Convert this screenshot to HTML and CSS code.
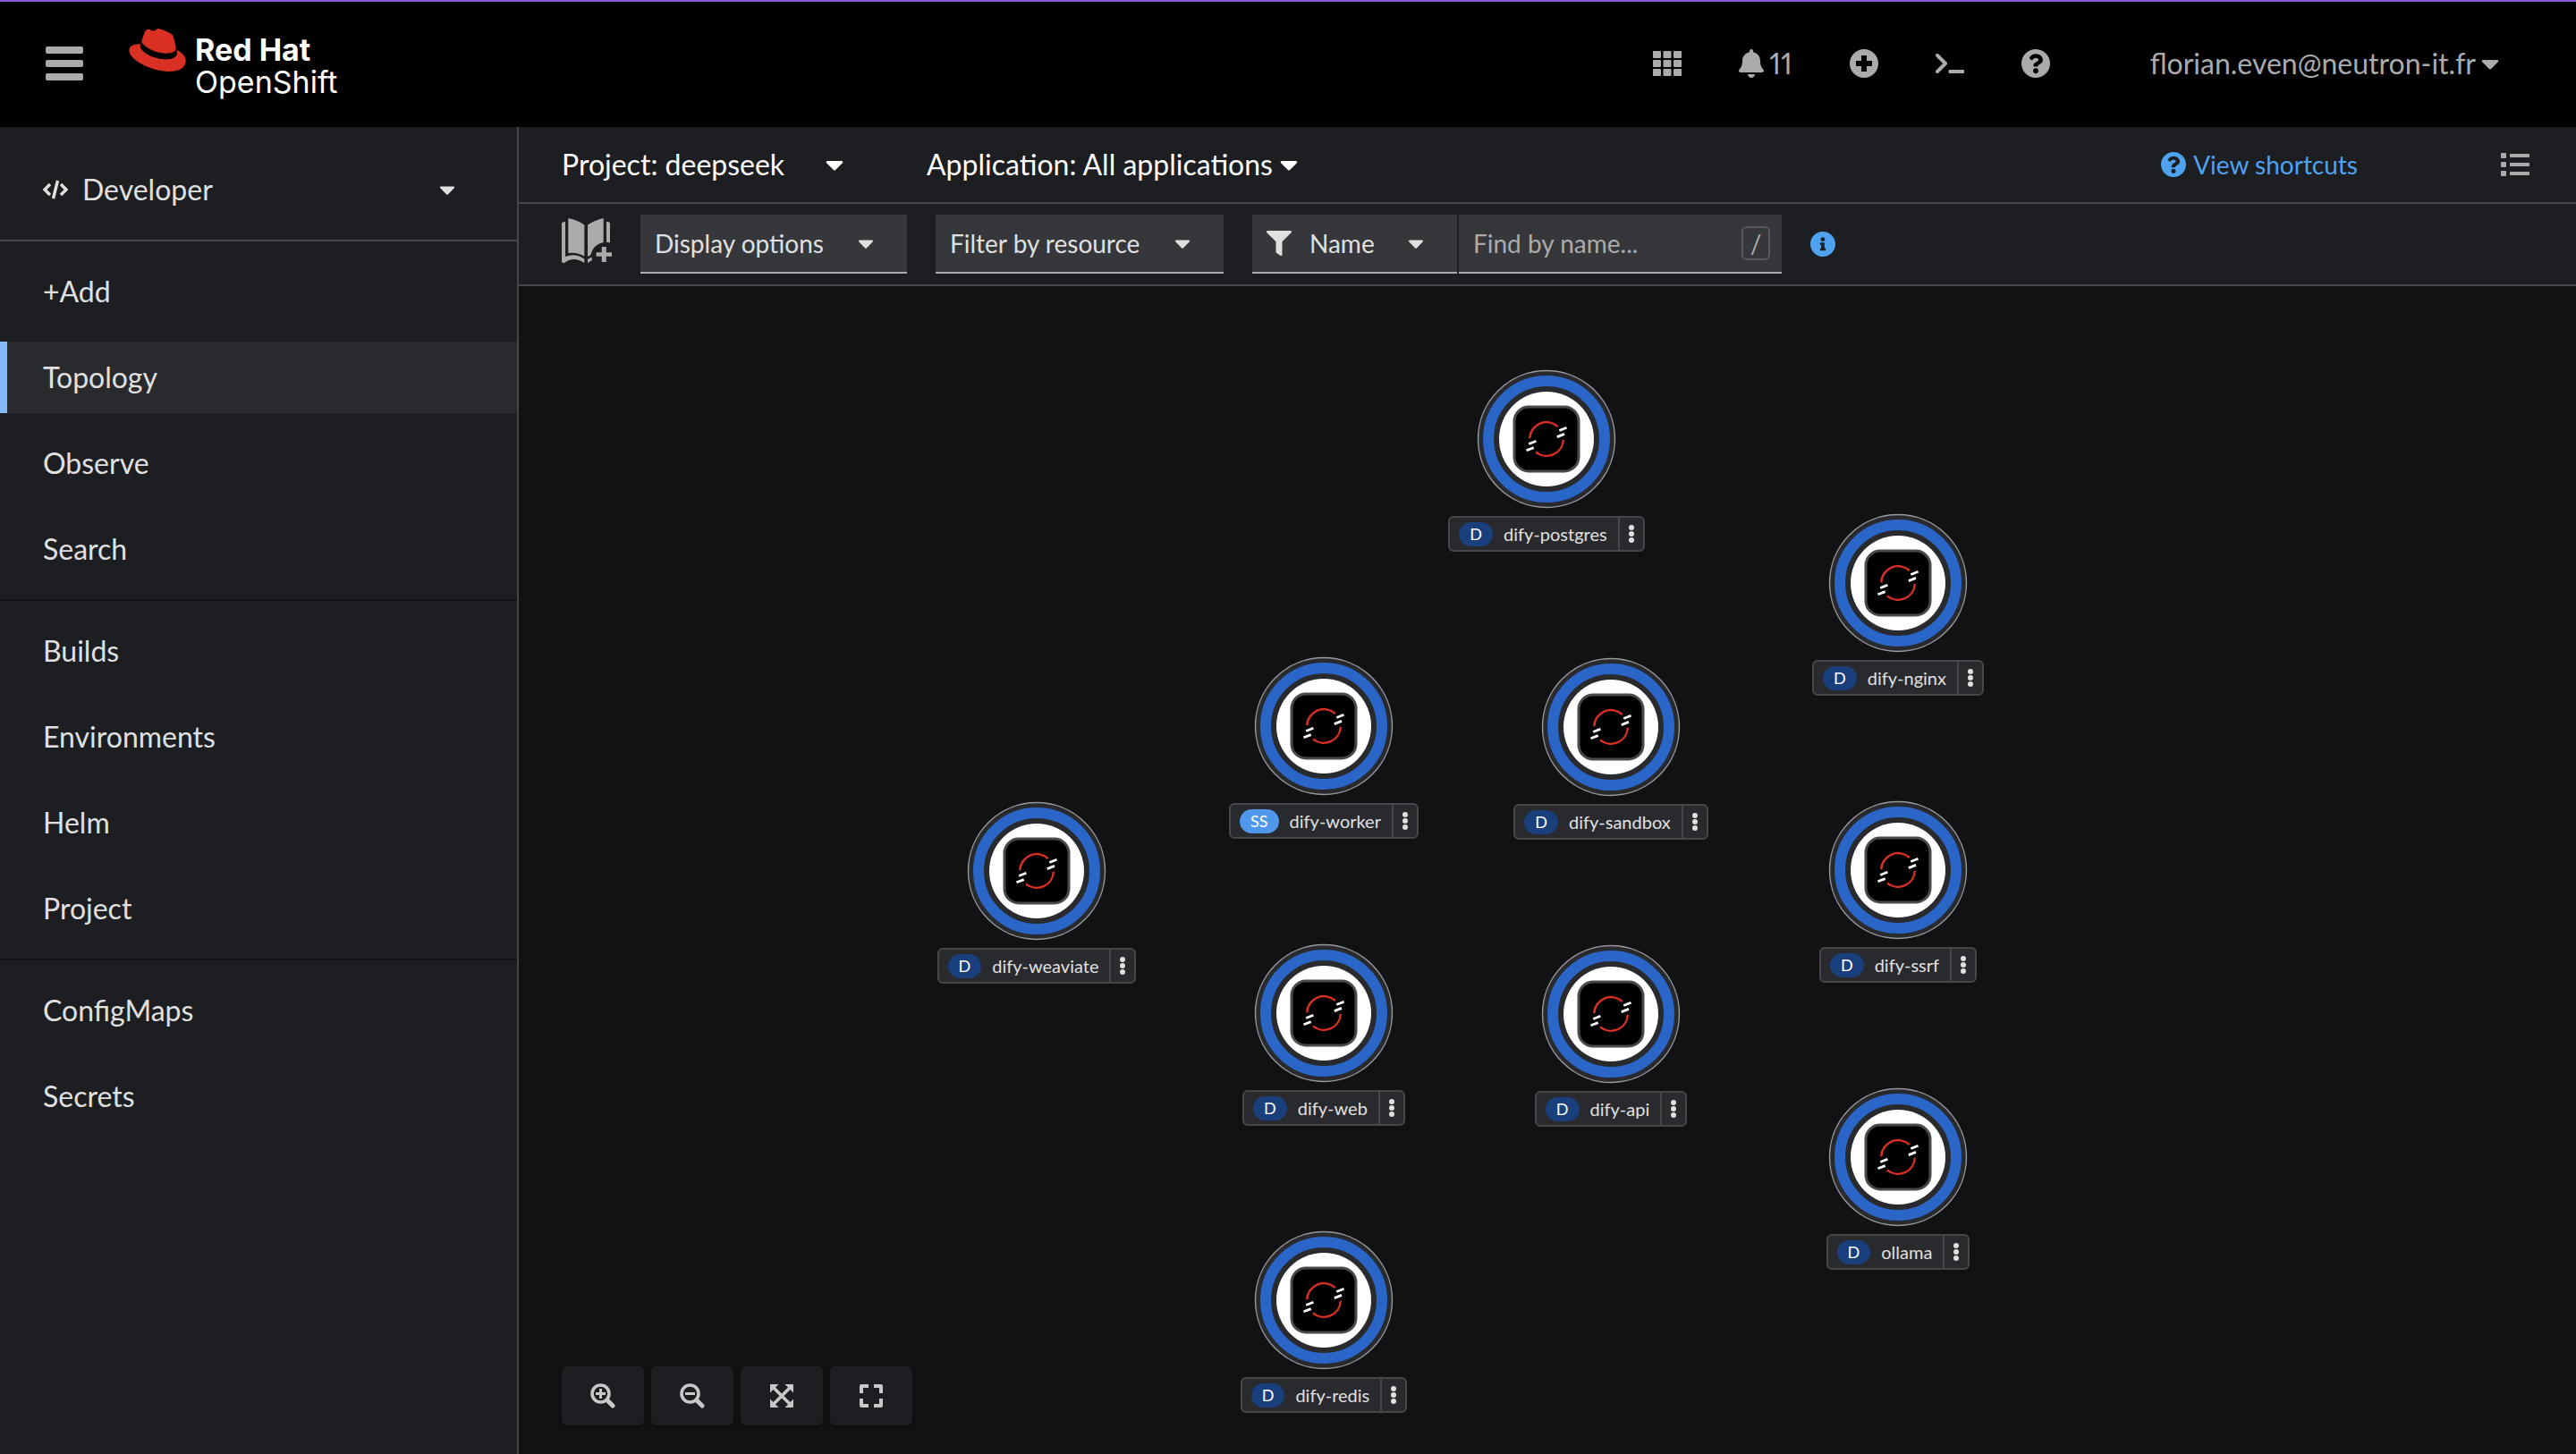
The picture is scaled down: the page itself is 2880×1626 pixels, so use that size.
FILE: index.html
```
<!DOCTYPE html>
<html lang="en">
<head>
    <meta charset="utf-8">
    <title>Topology · Red Hat OpenShift</title>
    <link rel="stylesheet" href="styles.css">
</head>
<body>
    <!-- Shared icons -->
    <svg class="sprite" aria-hidden="true">
        <symbol id="caret" viewBox="0 0 320 512"><path d="M31.3 192h257.3c17.8 0 26.7 21.5 14.1 34.1L174.1 354.7c-7.8 7.8-20.5 7.8-28.3 0L17.2 226.1C4.6 213.5 13.5 192 31.3 192z"/></symbol>
        <symbol id="question" viewBox="8 8 496 496"><path d="M504 256c0 136.997-111.043 248-248 248S8 392.997 8 256C8 119.083 119.043 8 256 8s248 111.083 248 248zM262.655 90c-54.497 0-89.255 22.957-116.549 63.758-3.536 5.286-2.353 12.415 2.715 16.258l34.699 26.31c5.205 3.947 12.621 3.008 16.665-2.122 17.864-22.658 30.113-35.797 57.303-35.797 20.429 0 45.698 13.148 45.698 32.958 0 14.976-12.363 22.667-32.534 33.976C247.128 238.528 216 254.941 216 296v4c0 6.627 5.373 12 12 12h56c6.627 0 12-5.373 12-12v-1.333c0-28.462 83.186-29.647 83.186-106.667 0-58.002-60.165-102-116.531-102zM256 338c-25.365 0-46 20.635-46 46 0 25.364 20.635 46 46 46s46-20.636 46-46c0-25.365-20.635-46-46-46z"/></symbol>
        <symbol id="workload" viewBox="-78 -78 156 156">
            <circle r="76.5" fill="#292a2e" stroke="#98999b" stroke-width="1.4"/>
            <circle r="65" fill="none" stroke="#2a65c8" stroke-width="12"/>
            <circle r="53" fill="#fff"/>
            <rect x="-36" y="-36" width="72" height="72" rx="16" fill="#000" stroke="#48494c" stroke-width="3"/>
            <g fill="none" stroke-width="2.4">
                <path stroke="#da3024" d="M-18.8-.7A18.8 18.8 0 0 1 12.7-14M18.8.7A18.8 18.8 0 0 1-12 14.5"/>
                <path stroke="#fff" stroke-width="2.8" d="M14.3-9.5l8.2-3.2M11.8-2.4l8.2-3.2M-19.8 5.5l8.2-3.2M-22.5 12.8l8.2-3.2"/>
            </g>
        </symbol>
        <symbol id="kebab" viewBox="0 0 6 20"><circle cx="3" cy="3" r="3"/><circle cx="3" cy="10" r="3"/><circle cx="3" cy="17" r="3"/></symbol>
    </svg>

    <header class="masthead">
        <button class="icon-btn" aria-label="Global navigation">
            <svg width="42" height="38" viewBox="0 0 42 38"><rect width="42" height="8" rx="2"/><rect y="15" width="42" height="8" rx="2"/><rect y="30" width="42" height="8" rx="2"/></svg>
        </button>
        <a class="brand" href="#">
            <svg width="64" height="48" viewBox="0 2.9 24 18.2" aria-hidden="true"><path d="M16.009 13.386c1.577 0 3.86-.326 3.86-2.202a1.765 1.765 0 0 0-.04-.431l-.94-4.08c-.216-.898-.406-1.305-1.982-2.093-1.223-.625-3.888-1.658-4.676-1.658-.733 0-.947.946-1.822.946-.842 0-1.467-.706-2.255-.706-.757 0-1.25.515-1.63 1.576 0 0-1.06 2.99-1.197 3.424a.81.81 0 0 0-.028.245c0 1.162 4.577 4.974 10.71 4.974m4.101-1.435c.218 1.032.218 1.14.218 1.277 0 1.765-1.984 2.745-4.593 2.745-5.895.004-11.06-3.451-11.06-5.734a2.326 2.326 0 0 1 .19-.925C2.746 9.415 0 9.794 0 12.217c0 3.969 9.405 8.861 16.851 8.861 5.71 0 7.149-2.582 7.149-4.62 0-1.605-1.387-3.425-3.887-4.512"/></svg>
            <span class="brand-text"><b>Red Hat</b><span>OpenShift</span></span>
        </a>
        <div class="masthead-tools">
            <button class="icon-btn" aria-label="Application launcher">
                <svg width="32" height="28" viewBox="0 0 32 28"><rect width="9" height="8" rx="1"/><rect x="11.5" width="9" height="8" rx="1"/><rect x="23" width="9" height="8" rx="1"/><rect y="10" width="9" height="8" rx="1"/><rect x="11.5" y="10" width="9" height="8" rx="1"/><rect x="23" y="10" width="9" height="8" rx="1"/><rect y="20" width="9" height="8" rx="1"/><rect x="11.5" y="20" width="9" height="8" rx="1"/><rect x="23" y="20" width="9" height="8" rx="1"/></svg>
            </button>
            <button class="icon-btn notifications" aria-label="Notifications, 11 unread">
                <svg width="28" height="32" viewBox="0 0 448 512"><path d="M224 512c35.32 0 63.97-28.65 63.97-64H160.03c0 35.35 28.65 64 63.97 64zm215.39-149.71c-19.32-20.76-55.47-51.99-55.47-154.29 0-77.7-54.48-139.9-127.94-155.16V32c0-17.67-14.32-32-31.98-32s-31.98 14.33-31.98 32v20.84C118.56 68.1 64.08 130.3 64.08 208c0 102.3-36.15 133.53-55.47 154.29-6 6.45-8.66 14.16-8.61 21.71.11 16.4 12.98 32 32.1 32h383.8c19.12 0 32-15.6 32.1-32 .05-7.55-2.61-15.27-8.61-21.71z"/></svg>
                <span>11</span>
            </button>
            <button class="icon-btn" aria-label="Quick create">
                <svg width="32" height="32" viewBox="0 0 32 32"><path fill-rule="evenodd" d="M16 0a16 16 0 1 1 0 32 16 16 0 0 1 0-32zM13 7v6H7v6h6v6h6v-6h6v-6h-6V7z"/></svg>
            </button>
            <button class="icon-btn" aria-label="OpenShift command line terminal">
                <svg width="32" height="22" viewBox="0 0 32 22"><path d="M2 2l9 9-9 9" fill="none" stroke="currentColor" stroke-width="4" stroke-linecap="round" stroke-linejoin="round"/><rect x="14.5" y="18" width="17.5" height="4" rx="1"/></svg>
            </button>
            <button class="icon-btn" aria-label="Help"><svg width="32" height="32"><use href="#question"/></svg></button>
            <button class="icon-btn user-menu">florian.even@neutron-it.fr<svg class="caret"><use href="#caret"/></svg></button>
        </div>
    </header>

    <div class="page">
        <aside class="sidebar">
            <div class="perspective">
                <svg width="28" height="22" viewBox="0 0 28 22" aria-hidden="true"><path d="M8 5l-6 6 6 6M20 5l6 6-6 6M16.5 1l-5 20" fill="none" stroke="currentColor" stroke-width="3.4"/></svg>
                <label class="dropdown perspective-switch">
                    <select aria-label="Perspective"><option>Developer</option></select>
                    <svg class="caret small"><use href="#caret"/></svg>
                </label>
            </div>
            <nav>
                <ul class="nav-section">
                    <li><a href="#">+Add</a></li>
                    <li><a href="#" class="current" aria-current="page">Topology</a></li>
                    <li><a href="#">Observe</a></li>
                    <li><a href="#">Search</a></li>
                </ul>
                <ul class="nav-section">
                    <li><a href="#">Builds</a></li>
                    <li><a href="#">Environments</a></li>
                    <li><a href="#">Helm</a></li>
                    <li><a href="#">Project</a></li>
                </ul>
                <ul class="nav-section">
                    <li><a href="#">ConfigMaps</a></li>
                    <li><a href="#">Secrets</a></li>
                </ul>
            </nav>
        </aside>

        <main class="content">
            <div class="context-bar">
                <label class="dropdown project">
                    <select aria-label="Project"><option>Project: deepseek</option></select>
                    <svg class="caret"><use href="#caret"/></svg>
                </label>
                <label class="dropdown application">
                    <select aria-label="Application"><option>Application: All applications</option></select>
                    <svg class="caret"><use href="#caret"/></svg>
                </label>
                <a class="shortcuts" href="#"><svg width="28" height="28"><use href="#question"/></svg>View shortcuts</a>
                <button class="icon-btn" aria-label="List view">
                    <svg width="32" height="26" viewBox="0 0 32 26"><rect width="6" height="6" rx="1"/><rect y="10" width="6" height="6" rx="1"/><rect y="20" width="6" height="6" rx="1"/><rect x="10" y="1" width="22" height="4" rx="1"/><rect x="10" y="11" width="22" height="4" rx="1"/><rect x="10" y="21" width="22" height="4" rx="1"/></svg>
                </button>
            </div>

            <div class="toolbar">
                <button class="icon-btn catalog" aria-label="Add to project">
                    <svg width="56" height="50" viewBox="0 0 56 50"><path d="M7.3 0Q18 2 25.3 7.5V42.5Q17 37.5 7.3 39zM29 7.5Q37 2 46.7 0V27Q35 29.5 32.5 41L29 43zM50 4Q54 3.5 54 6V27.5L50 26.8zM0 6Q0 4 4 4V43Q15 38.5 25.3 45.5V50Q13 42 3 50Q0 50 0 48zM29 46L33.5 43.5 34 47 29 50z"/><path d="M44.8 32h5v6.2H56v4.6h-6.2V49h-5v-6.2h-6.2v-4.6h6.2z"/></svg>
                </button>
                <label class="dropdown field">
                    <select aria-label="Display options"><option>Display options</option></select>
                    <svg class="caret small"><use href="#caret"/></svg>
                </label>
                <label class="dropdown field">
                    <select aria-label="Filter by resource"><option>Filter by resource</option></select>
                    <svg class="caret small"><use href="#caret"/></svg>
                </label>
                <div class="search-group">
                    <label class="dropdown field search-type">
                        <select aria-label="Search by"><option>Name</option></select>
                        <svg class="filter-icon" viewBox="0 0 512 512"><path d="M487.976 0H24.028C2.71 0-8.047 25.866 7.058 40.971L192 225.941V432c0 7.831 3.821 15.17 10.237 19.662l80 55.98C298.02 518.69 320 507.493 320 487.98V225.941l184.947-184.97C520.021 25.896 509.338 0 487.976 0z"/></svg>
                        <svg class="caret small"><use href="#caret"/></svg>
                    </label>
                    <div class="field search-box">
                        <input type="text" placeholder="Find by name..." aria-label="Find by name">
                        <kbd>/</kbd>
                    </div>
                </div>
                <button class="icon-btn info" aria-label="Search help">
                    <svg width="28" height="28" viewBox="8 8 496 496"><path d="M256 8C119.043 8 8 119.083 8 256c0 136.997 111.043 248 248 248s248-111.003 248-248C504 119.083 392.957 8 256 8zm0 110c23.196 0 42 18.804 42 42s-18.804 42-42 42-42-18.804-42-42 18.804-42 42-42zm56 254c0 6.627-5.373 12-12 12h-88c-6.627 0-12-5.373-12-12v-24c0-6.627 5.373-12 12-12h12v-64h-12c-6.627 0-12-5.373-12-12v-24c0-6.627 5.373-12 12-12h64c6.627 0 12 5.373 12 12v100h12c6.627 0 12 5.373 12 12v24z"/></svg>
                </button>
            </div>

            <div class="canvas">
                <div class="node" id="dify-postgres">
                    <svg class="node-ring"><use href="#workload"/></svg>
                    <div class="node-label"><span class="badge">D</span><span class="node-name">dify-postgres</span><button class="kebab" aria-label="dify-postgres actions"><svg><use href="#kebab"/></svg></button></div>
                </div>
                <div class="node" id="dify-nginx">
                    <svg class="node-ring"><use href="#workload"/></svg>
                    <div class="node-label"><span class="badge">D</span><span class="node-name">dify-nginx</span><button class="kebab" aria-label="dify-nginx actions"><svg><use href="#kebab"/></svg></button></div>
                </div>
                <div class="node" id="dify-worker">
                    <svg class="node-ring"><use href="#workload"/></svg>
                    <div class="node-label"><span class="badge statefulset">SS</span><span class="node-name">dify-worker</span><button class="kebab" aria-label="dify-worker actions"><svg><use href="#kebab"/></svg></button></div>
                </div>
                <div class="node" id="dify-sandbox">
                    <svg class="node-ring"><use href="#workload"/></svg>
                    <div class="node-label"><span class="badge">D</span><span class="node-name">dify-sandbox</span><button class="kebab" aria-label="dify-sandbox actions"><svg><use href="#kebab"/></svg></button></div>
                </div>
                <div class="node" id="dify-weaviate">
                    <svg class="node-ring"><use href="#workload"/></svg>
                    <div class="node-label"><span class="badge">D</span><span class="node-name">dify-weaviate</span><button class="kebab" aria-label="dify-weaviate actions"><svg><use href="#kebab"/></svg></button></div>
                </div>
                <div class="node" id="dify-ssrf">
                    <svg class="node-ring"><use href="#workload"/></svg>
                    <div class="node-label"><span class="badge">D</span><span class="node-name">dify-ssrf</span><button class="kebab" aria-label="dify-ssrf actions"><svg><use href="#kebab"/></svg></button></div>
                </div>
                <div class="node" id="dify-web">
                    <svg class="node-ring"><use href="#workload"/></svg>
                    <div class="node-label"><span class="badge">D</span><span class="node-name">dify-web</span><button class="kebab" aria-label="dify-web actions"><svg><use href="#kebab"/></svg></button></div>
                </div>
                <div class="node" id="dify-api">
                    <svg class="node-ring"><use href="#workload"/></svg>
                    <div class="node-label"><span class="badge">D</span><span class="node-name">dify-api</span><button class="kebab" aria-label="dify-api actions"><svg><use href="#kebab"/></svg></button></div>
                </div>
                <div class="node" id="ollama">
                    <svg class="node-ring"><use href="#workload"/></svg>
                    <div class="node-label"><span class="badge">D</span><span class="node-name">ollama</span><button class="kebab" aria-label="ollama actions"><svg><use href="#kebab"/></svg></button></div>
                </div>
                <div class="node" id="dify-redis">
                    <svg class="node-ring"><use href="#workload"/></svg>
                    <div class="node-label"><span class="badge">D</span><span class="node-name">dify-redis</span><button class="kebab" aria-label="dify-redis actions"><svg><use href="#kebab"/></svg></button></div>
                </div>

                <div class="zoom-controls">
                    <button aria-label="Zoom in"><svg width="28" height="28" viewBox="0 0 28 28"><g fill="none" stroke="currentColor"><circle cx="11.5" cy="11.5" r="9.5" stroke-width="3.6"/><path stroke-width="5" stroke-linecap="round" d="M19.5 19.5l5.5 5.5"/><path stroke-width="3" d="M6 11.5h11M11.5 6v11"/></g></svg></button>
                    <button aria-label="Zoom out"><svg width="28" height="28" viewBox="0 0 28 28"><g fill="none" stroke="currentColor"><circle cx="11.5" cy="11.5" r="9.5" stroke-width="3.6"/><path stroke-width="5" stroke-linecap="round" d="M19.5 19.5l5.5 5.5"/><path stroke-width="3" d="M6 11.5h11"/></g></svg></button>
                    <button aria-label="Fit to screen"><svg width="26" height="26" viewBox="0 0 26 26"><path d="M1 0h8.5L0 9.5V1a1 1 0 0 1 1-1zM25 0h-8.5L26 9.5V1a1 1 0 0 0-1-1zM1 26h8.5L0 16.5V25a1 1 0 0 0 1 1zM25 26h-8.5L26 16.5V25a1 1 0 0 1-1 1z"/><path d="M3 3l20 20M23 3L3 23" stroke="currentColor" stroke-width="3.6"/></svg></button>
                    <button aria-label="Reset view"><svg width="26" height="26" viewBox="0 0 26 26"><path d="M2 10V2h8M16 2h8v8M24 16v8h-8M10 24H2v-8" fill="none" stroke="currentColor" stroke-width="4" stroke-linejoin="round"/></svg></button>
                </div>
            </div>
        </main>
    </div>
</body>
</html>
```
FILE: styles.css
```
* {
    box-sizing: border-box;
}

body {
    margin: 0;
    min-height: 100vh;
    display: flex;
    flex-direction: column;
    background: #1c1e21;
    color: #e0e0e0;
    font-family: Lato, "Open Sans", sans-serif;
    font-size: 32px;
    line-height: 40px;
}

svg {
    display: block;
    flex: none;
    fill: currentColor;
}

a {
    color: inherit;
    text-decoration: none;
}

button, select, input {
    font: inherit;
    color: inherit;
    background: none;
    border: none;
    margin: 0;
    padding: 0;
}

button {
    cursor: pointer;
}

.sprite {
    position: absolute;
    width: 0;
    height: 0;
}

.icon-btn {
    display: flex;
    align-items: center;
    color: #aaabac;
}

.caret {
    width: 20px;
    height: 32px;
}

.caret.small {
    width: 18px;
    height: 28px;
}

/* Masthead */
.masthead {
    display: flex;
    align-items: center;
    height: 142px;
    padding: 0 86px 2px 51px;
    background: #000;
    border-top: 2px solid #8658d6;
}

.brand {
    display: flex;
    gap: 10px;
    margin-left: 51px;
    color: #fff;
}

.brand svg {
    color: #da3024;
}

.brand-text {
    display: flex;
    flex-direction: column;
    padding-top: 6px;
    font-family: Inter, sans-serif;
    font-size: 34px;
    line-height: 36px;
}

.masthead-tools {
    display: flex;
    align-items: center;
    gap: 64px;
    margin-left: auto;
}

.notifications {
    gap: 6px;
    font-variant-numeric: proportional-nums;
}

.user-menu {
    gap: 6px;
    margin-left: 48px;
}

/* Page body */
.page {
    flex: 1;
    display: flex;
}

.sidebar {
    flex: none;
    width: 580px;
    border-right: 2px solid #46474a;
}

.perspective {
    display: flex;
    align-items: center;
    gap: 16px;
    padding: 38px 69px 24px 48px;
    border-bottom: 2px solid #46474a;
}

/* Select and its caret share one grid cell */
.dropdown {
    display: grid;
    align-items: center;
}

.dropdown > * {
    grid-area: 1 / 1;
}

.dropdown select {
    appearance: none;
    height: 64px;
    cursor: pointer;
}

.dropdown svg {
    justify-self: end;
    pointer-events: none;
}

.perspective-switch {
    flex: 1;
}

.nav-section {
    display: flex;
    flex-direction: column;
    gap: 16px;
    margin: 0;
    padding: 16px 0;
    list-style: none;
}

.nav-section + .nav-section {
    border-top: 2px solid #111214;
}

.nav-section a {
    display: block;
    padding: 20px 40px;
    border-left: 8px solid transparent;
}

.nav-section a.current {
    background: #292a2d;
    border-left-color: #85b8f2;
}

.content {
    flex: 1;
    min-width: 0;
    display: flex;
    flex-direction: column;
}

.context-bar {
    display: flex;
    align-items: center;
    height: 86px;
    padding: 0 52px 0 48px;
    border-bottom: 2px solid #46474a;
    color: #fff;
}

.project select {
    padding-right: 65px;
}

.application {
    margin-left: 93px;
}

.application select {
    padding-right: 26px;
}

.shortcuts {
    display: flex;
    align-items: center;
    gap: 8px;
    margin: 0 160px 0 auto;
    color: #4fa2f0;
    font-size: 28px;
}

/* Filter toolbar */
.toolbar {
    display: flex;
    align-items: center;
    gap: 32px;
    height: 92px;
    padding: 0 48px;
    border-bottom: 2px solid #46474a;
    font-size: 28px;
}

.catalog {
    padding-bottom: 8px;
}

.field {
    background: #36373a;
    border-bottom: 2px solid #aaabac;
}

.field select {
    padding: 0 92px 0 16px;
}

.field .caret {
    margin-right: 37px;
}

.search-group {
    display: flex;
    gap: 2px;
}

.search-type select {
    padding-left: 64px;
}

.search-type .filter-icon {
    width: 28px;
    height: 28px;
    justify-self: start;
    margin-left: 16px;
}

.search-box {
    display: flex;
    align-items: center;
    width: 361px;
    padding: 0 13px 0 16px;
}

.search-box input {
    flex: 1;
    min-width: 0;
    height: 64px;
}

.search-box input::placeholder {
    color: #aaabac;
    opacity: 1;
}

kbd {
    width: 32px;
    border: 2px solid #58595c;
    border-radius: 6px;
    color: #aaabac;
    font-family: inherit;
    font-size: 28px;
    line-height: 34px;
    text-align: center;
}

.info {
    color: #4fa2f0;
}

/* Topology */
.canvas {
    position: relative;
    flex: 1;
    overflow: hidden;
    background: #111214;
}

.node {
    position: absolute;
    display: flex;
    flex-direction: column;
    align-items: center;
    gap: 8px;
    width: 240px;
}

#dify-postgres { left: 1029px; top: 93px; }
#dify-nginx    { left: 1422px; top: 254px; }
#dify-worker   { left: 780px;  top: 414px; }
#dify-sandbox  { left: 1101px; top: 415px; }
#dify-weaviate { left: 459px;  top: 576px; }
#dify-ssrf     { left: 1422px; top: 575px; }
#dify-web      { left: 780px;  top: 735px; }
#dify-api      { left: 1101px; top: 736px; }
#ollama        { left: 1422px; top: 896px; }
#dify-redis    { left: 780px;  top: 1056px; }

.node-ring {
    width: 156px;
    height: 156px;
}

.node-label {
    display: flex;
    align-items: center;
    height: 40px;
    padding-left: 10px;
    border: 2px solid #46474a;
    border-radius: 6px;
    background: #292a2e;
    font-size: 20px;
    line-height: 36px;
    white-space: nowrap;
}

.badge {
    padding: 0 12px;
    border-radius: 14px;
    background: #1a3f7d;
    color: #fff;
    font-size: 18px;
    line-height: 27px;
}

.badge.statefulset {
    background: #4f97eb;
}

.node-name {
    padding: 0 12px;
}

.kebab {
    display: flex;
    align-items: center;
    justify-content: center;
    width: 28px;
    height: 36px;
    border-left: 2px solid #46474a;
}

.kebab svg {
    width: 6px;
    height: 20px;
}

.zoom-controls {
    position: absolute;
    left: 48px;
    bottom: 32px;
    display: flex;
    gap: 8px;
}

.zoom-controls button {
    display: flex;
    align-items: center;
    justify-content: center;
    width: 92px;
    height: 66px;
    border-radius: 6px;
    background: #1c1e21;
    box-shadow: 0 2px 4px rgba(0, 0, 0, 0.4);
    color: #c7c8ca;
}
```
